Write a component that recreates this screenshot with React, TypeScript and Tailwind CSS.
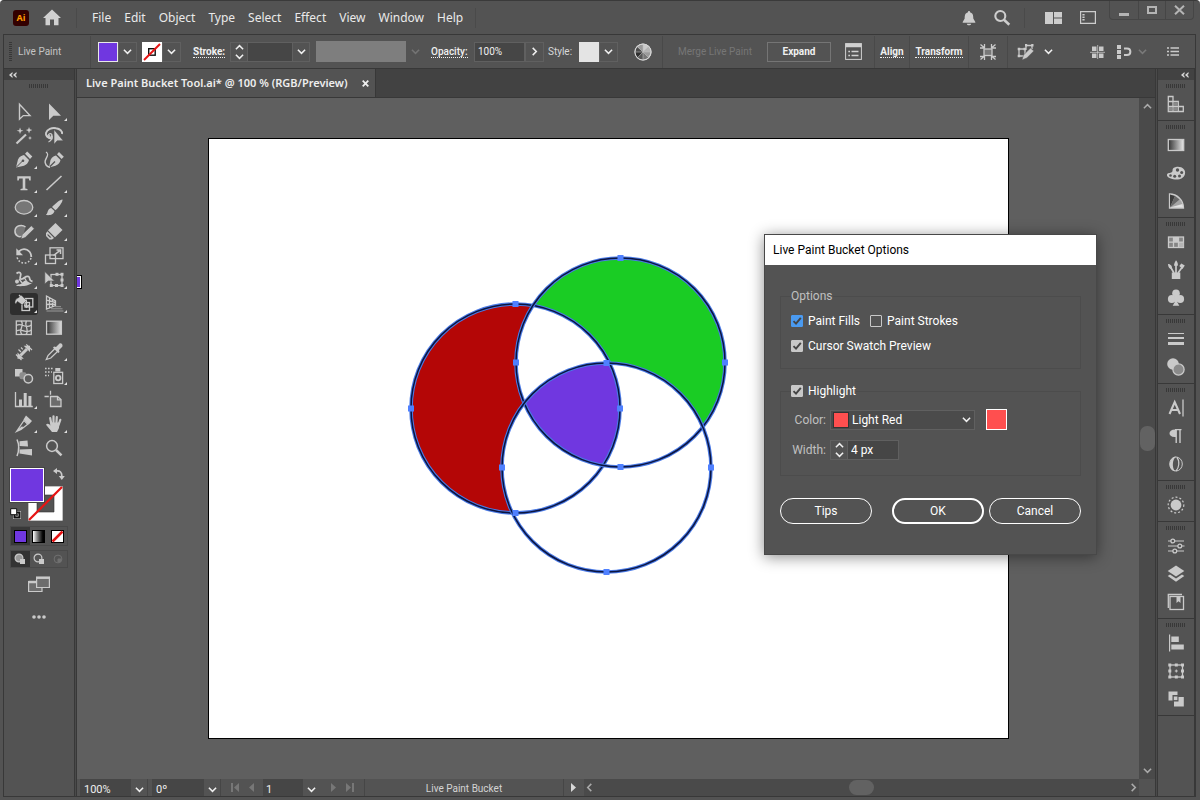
import React, { useState } from 'react';
import type { ReactNode } from 'react';
import { clsx } from 'clsx';

interface IconProps {
  children: ReactNode;
  size?: number;
}

// 20x20 drawing grid shared by every tool and panel icon
const Icon = ({ children, size = 20 }: IconProps) => (
  <svg
    width={size}
    height={size}
    viewBox="0 0 20 20"
    fill="none"
    stroke="#cacaca"
    strokeWidth="1.3"
    className="shrink-0 overflow-visible"
    aria-hidden="true"
  >
    {children}
  </svg>
);

const Chevron = ({ dir = 'down', color = '#f0f0f0' }: { dir?: 'down' | 'up' | 'left' | 'right'; color?: string }) => {
  const paths = { down: 'M1 3 L5 7 L9 3', up: 'M1 7 L5 3 L9 7', left: 'M7 1 L3 5 L7 9', right: 'M3 1 L7 5 L3 9' };
  return (
    <svg width="9" height="9" viewBox="0 0 10 10" fill="none" stroke={color} strokeWidth="1.7" className="shrink-0" aria-hidden="true">
      <path d={paths[dir]} />
    </svg>
  );
};

const Spinner = () => (
  <span className="flex h-full w-4 shrink-0 flex-col items-center justify-between">
    <button aria-label="Increase"><Chevron dir="up" /></button>
    <button aria-label="Decrease"><Chevron /></button>
  </span>
);

const Grip = () => (
  <span className="block h-1 w-5 bg-[repeating-linear-gradient(90deg,#383838_0_1px,transparent_1px_2px)]" />
);

const Divider = () => <span className="block h-8 w-px shrink-0 bg-[#494949]" />;

const DoubleChevron = () => (
  <svg width="8" height="6" viewBox="0 0 8 6" fill="#d8d8d8" aria-hidden="true">
    <path d="M3.5 0 V2 L2.2 3 L3.5 4 V6 L0 3 Z M7.5 0 V2 L6.2 3 L7.5 4 V6 L4 3 Z" />
  </svg>
);

const F = '#cacaca';
const BG = '#535353';

const tools: { name: string; corner?: boolean; icon: ReactNode }[] = [
  { name: 'Selection', icon: <path d="M5.5 2.2 V17.2 L9.3 13.6 H16 Z" strokeWidth="1.4" /> },
  { name: 'Direct Selection', corner: true, icon: <path d="M5 1.5 V18 L9.3 13.8 H17 Z" fill={F} stroke="none" /> },
  {
    name: 'Magic Wand',
    icon: (
      <g>
        <path d="M2.5 17.5 L12 8.5" strokeWidth="2.2" />
        <path d="M6 1.5 L7 4 L9.5 4.8 L7 5.6 L6 8 L5.2 5.6 L2.6 4.8 L5.2 4 Z M15 1 L15.9 3.3 L18.4 4 L15.9 4.9 L15 7.5 L14.2 4.9 L11.8 4 L14.2 3.3 Z M16 10 L16.6 11.4 L18 12 L16.6 12.6 L16 14 L15.4 12.6 L14 12 L15.4 11.4 Z" fill={F} stroke="none" />
      </g>
    ),
  },
  {
    name: 'Lasso',
    icon: (
      <g>
        <path d="M8.5 12.5 C3 12.5 1.5 9 2 7 C3 3 8 1.5 12 2.2 C16 2.8 18.5 5 18 8" strokeWidth="1.9" />
        <path d="M4.5 12 C2.5 9 6 6.5 7.8 8.5 C9 11 7.5 15 4.5 16 M7.8 9.5 C6 13 3.8 11 6 9.3" />
        <path d="M10 3.5 V18.3 L13.2 14.8 H19.3 Z" fill={F} stroke={BG} strokeWidth="0.6" />
      </g>
    ),
  },
  {
    name: 'Pen',
    corner: true,
    icon: (
      <g fill={F} stroke="none">
        <path d="M2 17.5 L4 9.5 C5.5 6.5 8 5.5 10 5 L15 10 C14.5 12.5 12.5 14.8 10 15.7 Z" />
        <path d="M11 3.8 L13.2 1.5 L18.3 6.6 L16 9 Z" />
        <path d="M2.5 17 L8.5 11" stroke={BG} strokeWidth="1" />
        <circle cx="9" cy="10.7" r="1.3" fill={BG} />
      </g>
    ),
  },
  {
    name: 'Curvature',
    icon: (
      <g fill={F} stroke="none">
        <path d="M5 17.5 L6.5 10 C8 7 10 6 12 5.5 L16.5 10 C16 12.8 14 14.8 11.5 15.8 Z" />
        <path d="M13 4.2 L15 2 L19.8 6.7 L17.6 9 Z" />
        <path d="M5.5 17 L11 11.5" stroke={BG} />
        <path d="M2 2 C7 5 -0.5 9 1.3 13 C2 16 4 17 6 17.2" fill="none" stroke={F} strokeWidth="1.4" />
      </g>
    ),
  },
  { name: 'Type', corner: true, icon: <path d="M3.3 2.2 H16.7 V6.5 H15.3 L14.8 4.5 H11.3 V14.5 L13.5 15 V16.2 H6.5 V15 L8.7 14.5 V4.5 H5.2 L4.7 6.5 H3.3 Z" fill={F} stroke="none" /> },
  { name: 'Line Segment', corner: true, icon: <path d="M2.5 16 L17.5 2" strokeWidth="1.6" /> },
  { name: 'Ellipse', corner: true, icon: <ellipse cx="10" cy="9.3" rx="8.8" ry="6.8" fill="#777" /> },
  {
    name: 'Paintbrush',
    corner: true,
    icon: (
      <g fill={F} stroke="none">
        <path d="M18.5 1.5 C19 3 16 8 11.5 12.3 L8 9 C12 5 16.5 1.2 18.5 1.5 Z" />
        <path d="M7.2 10 L10.5 13 C9.5 17 5.5 17.5 1.8 17 C4.2 15.5 3 11 7.2 10 Z" />
      </g>
    ),
  },
  {
    name: 'Shaper',
    corner: true,
    icon: (
      <g>
        <path d="M9.5 13 C5 17.5 0.5 12.5 1 8.5 C1.5 3.5 8 2 11.5 5" fill="#777" strokeWidth="1.5" />
        <path d="M7 17 L8.2 12.6 L17.3 3.8 L20.3 6.7 L11.2 15.6 Z" fill={F} stroke={BG} strokeWidth="0.6" />
      </g>
    ),
  },
  {
    name: 'Eraser',
    corner: true,
    icon: (
      <g fill={F} stroke="none">
        <path d="M11.5 1 L18.5 8 L11 15.3 L4 8.3 Z" />
        <path d="M3.4 9.2 L10 15.9 L8 17.5 H5.5 L2 13.9 V11.2 Z M3.6 11.8 V13.4 L6 15.8 L7.5 15.5 Z" fillRule="evenodd" />
      </g>
    ),
  },
  {
    name: 'Rotate',
    corner: true,
    icon: (
      <g>
        <path d="M17.3 11 C17 4 10 0.5 4.8 5.5" strokeWidth="1.8" />
        <path d="M2.3 2.3 V9.3 H9 Z" fill={F} stroke="none" />
        <path d="M17 12 C15 19 5 19 3 11" strokeWidth="1.5" strokeDasharray="1.7 1.7" />
      </g>
    ),
  },
  {
    name: 'Scale',
    corner: true,
    icon: (
      <g>
        <rect x="6" y="1.8" width="13" height="10.8" />
        <rect x="1.5" y="9" width="10" height="8.5" />
        <path d="M9.5 9.5 L15.5 4.8 M12.5 4 H16.5 V8" strokeWidth="1.5" />
      </g>
    ),
  },
  {
    name: 'Width',
    corner: true,
    icon: (
      <g>
        <path d="M2.5 3.5 C6 0.8 7.5 3.5 6.5 6 C5.8 8 6 9.5 8 9 C10.5 8 12 5.5 14.5 6.5 C17 8 14 10.5 18.5 11.5" strokeWidth="1.8" />
        <path d="M2 16 C4 13 6 16 9 12 C12 9 13 12.5 18 13.5 C13 15.5 12 16.5 2 16 Z" fill={F} stroke="none" />
        <path d="M10 7 L14 14 M5 9 L9 14" />
        <circle cx="3" cy="11.5" r="1.3" fill={F} />
      </g>
    ),
  },
  {
    name: 'Free Transform',
    corner: true,
    icon: (
      <g>
        <rect x="7" y="4.5" width="11" height="11" />
        <g fill={F} stroke="none">
          <rect x="16.5" y="2.8" width="3" height="3" /><rect x="16.5" y="14" width="3" height="3" />
          <rect x="5.8" y="14" width="3" height="3" /><rect x="11" y="14" width="3" height="3" />
          <rect x="16.5" y="8.5" width="3" height="3" /><rect x="11.5" y="2.8" width="3" height="3" />
        </g>
        <path d="M0.8 1.5 V14 L4.2 11 H10.5 Z" fill={F} stroke={BG} strokeWidth="0.6" />
      </g>
    ),
  },
  {
    name: 'Live Paint Bucket',
    corner: true,
    icon: (
      <g>
        <rect x="11" y="4.5" width="7.8" height="8.5" />
        <rect x="8" y="8.5" width="7.5" height="8" />
        <path d="M4 4 L7.5 1.2 L12.5 6.5 L8.3 11 L3.5 7.5 C2.3 8.5 2.8 10 1.5 9.8 C0.2 9 1.2 4.5 4 4 Z" fill={F} stroke="#2e2e2e" strokeWidth="0.5" />
        <path d="M5 1 L7 3" />
        <path d="M12 5.5 C13 7.5 12.8 9 12.5 13 M10.3 11 L12.5 13.4 L14.8 11" />
      </g>
    ),
  },
  {
    name: 'Perspective Grid',
    corner: true,
    icon: (
      <g>
        <path d="M2.5 2 V15 L11.5 11.5 V7 Z M2.5 6.2 L11.5 8.5 M2.5 10.5 L11.5 10 M5.5 3.8 V13.7 M8.5 5.5 V12.5" />
        <path d="M11 12.7 H17 M7 14.8 H18.5 M2.5 17 H19.5" strokeWidth="1" stroke="#9a9a9a" />
      </g>
    ),
  },
  {
    name: 'Mesh',
    icon: (
      <g>
        <rect x="2.3" y="3" width="15" height="13.5" />
        <path d="M2.3 7.5 C8 3.5 11 12 17.3 7 M2.3 13 C8 9.5 12 16.5 17.3 12 M7 3 C11.5 7 3.5 12 8 16.5 M12.5 3 C9.5 7 16 12 12 16.5" />
      </g>
    ),
  },
  {
    name: 'Gradient',
    icon: (
      <g>
        <linearGradient id="toolGrad"><stop offset="0" stopColor="#333" /><stop offset="1" stopColor="#ddd" /></linearGradient>
        <rect x="2.6" y="3.2" width="14.8" height="13" fill="url(#toolGrad)" />
      </g>
    ),
  },
  {
    name: 'Dimension',
    icon: (
      <g>
        <path d="M6.5 13.5 L13 7" strokeWidth="3" />
        <path d="M3.5 10.5 V16.8 H9.8 Z M9.7 3.7 H16 V10 Z" fill={F} stroke="none" />
        <path d="M2 12.5 L7.5 18 M12.3 2.3 L18 8 M4.5 7.5 L7 10 M7 5.5 L8.8 7.3" strokeWidth="1.2" />
      </g>
    ),
  },
  {
    name: 'Eyedropper',
    corner: true,
    icon: (
      <g>
        <path d="M2.3 17.5 L4 13.5 L11 6.5 L13.8 9.2 L6.8 16 Z" />
        <path d="M10 4.5 L12 5 L15.5 1.5 C17.5 0.8 19.2 2.8 18.3 4.7 L15 8 L15.5 10 L14.3 11 L9 5.7 Z" fill={F} stroke="none" />
      </g>
    ),
  },
  {
    name: 'Blend',
    icon: (
      <g>
        <rect x="1" y="3" width="7.5" height="7.5" fill={F} stroke="none" />
        <rect x="5.5" y="6.2" width="7" height="7" rx="2" fill="#8d8d8d" stroke="none" />
        <circle cx="14.3" cy="12.8" r="4.2" fill="#5c5c5c" strokeWidth="1.5" />
      </g>
    ),
  },
  {
    name: 'Symbol Sprayer',
    corner: true,
    icon: (
      <g>
        <rect x="9.8" y="6.3" width="8.8" height="11.2" />
        <rect x="11.3" y="2" width="5" height="3.5" fill={F} stroke="none" />
        <circle cx="14.2" cy="12" r="2.3" strokeWidth="1.8" />
        <path d="M1 2.5 H9.5 M1 6 H8 M1 9.5 H5" strokeWidth="1.6" strokeDasharray="1.6 1.4" />
      </g>
    ),
  },
  {
    name: 'Column Graph',
    corner: true,
    icon: (
      <g>
        <path d="M1.5 2 V16.5 H18.8" />
        <path d="M5 9.5 H8 V16 H5 Z M9.7 3 H12.7 V16 H9.7 Z M14.4 6 H17.4 V16 H14.4 Z" fill={F} stroke="none" />
      </g>
    ),
  },
  {
    name: 'Artboard',
    icon: (
      <g>
        <path d="M6.5 6.5 H13.5 L17 9.5 V16.5 H6.5 Z" fill="#6c6c6c" />
        <path d="M13.5 6.5 V9.8 H17 M0.5 6.5 H4.8 M6.5 0.8 V4.8" />
      </g>
    ),
  },
  {
    name: 'Slice',
    corner: true,
    icon: (
      <g>
        <path d="M2.5 17.5 L10 6.5 L13.8 10.3 L7 15.5 Z M2.5 17.5 L8.5 12.8" />
        <path d="M12 1.5 L18 7 L14.8 10.5 L9.5 5.5 Z" fill={F} stroke="none" />
      </g>
    ),
  },
  {
    name: 'Hand',
    corner: true,
    icon: (
      <g>
        <path d="M6.2 4 L7.3 10 M9.5 2.3 V9 M12.8 3 L12.4 9 M16.3 5.8 L14.5 11" strokeWidth="2.2" strokeLinecap="round" />
        <path d="M6.3 8.5 H15.5 L15 14 L13 18 H8 L2 10.8 C3.3 8.8 5.2 10 6.6 11.5 Z" fill={F} stroke="none" />
      </g>
    ),
  },
  {
    name: 'Perspective Selection',
    icon: (
      <g fill={F} stroke="none">
        <path d="M3 1.5 C5 6 5 13 3 18" fill="none" stroke={F} strokeWidth="1.5" />
        <path d="M5.5 3.3 L13.5 2.5 L14 8.5 L5.5 8 Z M5.5 11.5 L18 11 V17.5 L5.5 15.5 Z" />
      </g>
    ),
  },
  { name: 'Zoom', icon: <g><circle cx="8" cy="8" r="5.4" strokeWidth="1.5" /><path d="M12 12 L17.5 17.3" strokeWidth="2.5" /></g> },
];

const panelGroups: { name: string; icon: ReactNode }[][] = [
  [
    {
      name: 'Color Guide',
      icon: (
        <g strokeWidth="1.3">
          <path d="M2.3 2.5 H7 V7.5 H2.3 Z M2.3 7.5 V17.5 H17.3 V12.5 H12.3 V7.5 Z M7 7.5 V17.5 M12.3 12.5 V17.5 M2.3 12.5 H12.3" />
          <path d="M7.7 8.2 h4 v3.7 h-4 Z M2.9 13.1 h3.5 v3.7 h-3.5 Z M7.7 13.1 h4 v3.7 h-4 Z" fill="#8a8a8a" stroke="none" />
        </g>
      ),
    },
  ],
  [
    {
      name: 'Gradient',
      icon: (
        <g>
          <linearGradient id="panelGrad"><stop offset="0" stopColor="#333" /><stop offset="1" stopColor="#e8e8e8" /></linearGradient>
          <rect x="2.3" y="4.5" width="15.4" height="11" fill="url(#panelGrad)" />
        </g>
      ),
    },
    {
      name: 'Color',
      icon: (
        <g fill={F} stroke="none">
          <path d="M10 4 C16 3 20 7 19 11 C18 15 14 17 9 16.5 C4 16 0.5 14 1 11.5 C1.5 9.5 4 10.5 6 9 C7.5 7.5 5 5 10 4 Z" />
          <g fill={BG}><circle cx="11.5" cy="7" r="1.7" /><circle cx="15.7" cy="9.5" r="1.5" /><circle cx="13.5" cy="13" r="1.5" /><circle cx="8.7" cy="13.3" r="1.5" /><circle cx="4.5" cy="12.5" r="1.3" /></g>
        </g>
      ),
    },
    {
      name: 'Color Themes',
      icon: (
        <g>
          <path d="M3.5 3 V17 H17.5 C17.5 9 11 3 3.5 3 Z" fill="#a5a5a5" />
          <path d="M4 16.5 V3.5 L9 5 Z" fill="#3c3c3c" stroke="none" />
          <path d="M4 16.5 L9 5 L13.5 8.5 Z" fill="#686868" stroke="none" />
          <path d="M4 16.5 L16.5 13 L17 16.5 Z" fill="#e2e2e2" stroke="none" />
        </g>
      ),
    },
  ],
  [
    {
      name: 'Swatches',
      icon: (
        <g>
          <rect x="2.5" y="5" width="15" height="10.5" fill="#858585" />
          <rect x="7.5" y="5" width="5" height="5" fill={F} stroke="none" /><rect x="12.5" y="10" width="5" height="5" fill="#b5b5b5" stroke="none" />
          <path d="M2.5 10.2 H17.5 M7.5 5 V15.5 M12.5 5 V15.5" />
        </g>
      ),
    },
    {
      name: 'Brushes',
      icon: (
        <g>
          <rect x="5.8" y="12.5" width="8.5" height="6.5" fill={F} stroke="none" />
          <path d="M8 13 L4.5 7 M10 13 V4 M12 13 L16.3 7" strokeWidth="1.7" />
          <path d="M2 4 C5 4 6.5 6.5 5.8 9 C3.5 9 2 7 2 4 Z M8 5.8 C8 3.5 9 2 10 0.3 C11.5 2 12.2 4 11.8 5.8 Z M13.3 6 L15.3 3.6 L18.8 5.5 L16.5 9 Z" fill={F} stroke="none" />
        </g>
      ),
    },
    { name: 'Symbols', icon: <g fill={F} stroke="none"><circle cx="10" cy="5.3" r="3.8" /><circle cx="5.8" cy="11" r="3.9" /><circle cx="14.2" cy="11" r="3.9" /><path d="M8.8 8 H11.2 V14 L13.3 17.7 H6.7 L8.8 14 Z" /></g> },
  ],
  [
    { name: 'Stroke', icon: <g fill={F} stroke="none"><rect x="2" y="4" width="16" height="1" /><rect x="2" y="8" width="16" height="2" /><rect x="2" y="13" width="16" height="3" /></g> },
    { name: 'Transparency', icon: <g><circle cx="7" cy="7" r="5.8" fill={F} stroke="none" /><circle cx="12.5" cy="12.5" r="5.6" fill="#8a8a8a" /></g> },
  ],
  [
    { name: 'Character', icon: <g><path d="M3.5 16 L8.7 4 L14 16 M5.2 12 H12.2" strokeWidth="2.1" /><path d="M17 1.5 V18.5" /></g> },
    { name: 'Paragraph', icon: <g><path d="M10 3.5 C1 3 2 11.5 9 11 H10 Z" fill={F} stroke="none" /><path d="M10.2 3.8 V17 M14 3.8 V17 M9 3.6 H15.5" strokeWidth="1.4" /></g> },
    { name: 'OpenType', icon: <g><ellipse cx="10" cy="10" rx="6.3" ry="7" strokeWidth="1" /><path d="M10 2.5 C2 3 2 17 9 17.3 C6 14 6 6 10 2.5 Z" fill={F} stroke="none" /><path d="M11 3.5 C14 7 13 14 10 17" strokeWidth="1.2" /></g> },
  ],
  [{ name: 'Appearance', icon: <g><circle cx="10" cy="10" r="5.4" fill={F} stroke="none" /><circle cx="10" cy="10" r="7.8" strokeDasharray="2 2" strokeWidth="1.2" /></g> }],
  [
    { name: 'Properties', icon: <g><path d="M2 5 H5 M8.6 5 H18 M2 10 H12 M15.6 10 H18.5 M2 15 H7 M10.6 15 H18" strokeWidth="1.2" /><circle cx="6.8" cy="5" r="1.9" /><circle cx="13.8" cy="10" r="1.9" /><circle cx="8.8" cy="15" r="1.9" /></g> },
    { name: 'Layers', icon: <g fill={F} stroke="none"><path d="M10 1.5 L18.3 7 L10 12.5 L1.7 7 Z" /><path d="M1.7 12 L4 10.5 L10 14.6 L16 10.5 L18.3 12 L10 17.7 Z" /></g> },
    { name: 'Libraries', icon: <g><rect x="4" y="4.5" width="13.5" height="13" /><path d="M2.3 16 V2.5 H16" /><path d="M10.5 4.5 V11 L12.5 9.3 L14.5 11 V4.5 Z" fill={F} stroke="none" /></g> },
  ],
  [
    { name: 'Align', icon: <g fill={F} stroke="none"><rect x="3" y="1.5" width="1.2" height="17" /><rect x="5.3" y="3.5" width="7.5" height="5.5" /><rect x="5.3" y="11.5" width="12.5" height="5" /></g> },
    {
      name: 'Transform',
      icon: (
        <g>
          <rect x="4" y="4" width="12.5" height="12" />
          <path d="M2.3 2.5 h3 v3 h-3 Z M8.8 2.5 h3 v3 h-3 Z M15 2.5 h3 v3 h-3 Z M2.3 8.5 h3 v3 h-3 Z M15 8.5 h3 v3 h-3 Z M2.3 14.5 h3 v3 h-3 Z M8.8 14.5 h3 v3 h-3 Z M15 14.5 h3 v3 h-3 Z" fill={F} stroke="none" />
          <path d="M10.3 8.5 V11.5 M8.8 10 H11.8" strokeWidth="1" />
        </g>
      ),
    },
    { name: 'Pathfinder', icon: <g fill={F} stroke="none"><path d="M2.5 2.5 H11.5 V6 H6.5 V11.5 H2.5 Z M12.5 8 H17.8 V17.5 H8 V12.5 H12.5 Z" /><rect x="7.8" y="7.5" width="3.6" height="3.6" /></g> },
  ],
];

const menus = ['File', 'Edit', 'Object', 'Type', 'Select', 'Effect', 'View', 'Window', 'Help'];

const MenuBar = () => (
  <header className="flex h-[33px] shrink-0 items-center pr-1.5">
    <div className="flex h-full flex-1 items-center pl-[13px]">
      <span className="flex size-4 items-center justify-center rounded-[3px] bg-[#330000] text-[9px] leading-none font-bold text-[#ff9a00]">Ai</span>
      <button aria-label="Home" className="ml-[14px]">
        <svg width="18" height="17" viewBox="0 0 18 17" fill="#d0d0d0" aria-hidden="true">
          <path d="M9 0.5 L0 9 H2.5 V16.3 H7 V10.5 H11 V16.3 H15.5 V9 H18 Z" />
        </svg>
      </button>
      <span className="ml-[15px] h-5 w-px bg-[#4a4a4a]" />
      <nav className="ml-[15px] flex gap-[13px] text-[12px] text-[#eaeaea]">
        {menus.map((m) => (
          <button key={m}>{m}</button>
        ))}
      </nav>
      <span className="ml-3 h-5 w-px bg-[#4a4a4a]" />
    </div>

    <div className="flex items-center">
      <button aria-label="Notifications">
        <svg width="14" height="16" viewBox="0 0 14 16" fill="#cdcdcd" aria-hidden="true">
          <path d="M7 1 C7.8 1 8 1.6 8 2.2 C11 3 11.3 5.5 11.3 8.5 L13.3 12 V12.8 H0.7 V12 L2.7 8.5 C2.7 5.5 3 3 6 2.2 C6 1.6 6.2 1 7 1 Z M4.8 13.8 H9.2 C9 15.8 5 15.8 4.8 13.8 Z" />
        </svg>
      </button>
      <button aria-label="Search" className="ml-[17px]">
        <svg width="18" height="17" viewBox="0 0 18 17" fill="none" stroke="#cdcdcd" aria-hidden="true">
          <circle cx="7.3" cy="7" r="5" strokeWidth="2.1" />
          <path d="M11 10.8 L16.3 15.8" strokeWidth="2.6" />
        </svg>
      </button>
      <span className="ml-[13px] h-5 w-px bg-[#4a4a4a]" />
      <button aria-label="Arrange Documents" className="ml-5">
        <svg width="17" height="12" viewBox="0 0 17 12" fill="#cdcdcd" aria-hidden="true"><path d="M0 0 H8 V12 H0 Z M9 0 H17 V5.5 H9 Z M9 6.5 H17 V12 H9 Z" /></svg>
      </button>
      <button aria-label="Workspace" className="ml-[18px]">
        <svg width="16" height="13" viewBox="0 0 16 13" fill="none" stroke="#cdcdcd" aria-hidden="true"><path d="M0.6 0.6 H15.4 V12.4 H0.6 Z" strokeWidth="1.2" /><path d="M3.5 3 V10.5" strokeWidth="2.2" strokeDasharray="1.5 1" /></svg>
      </button>
    </div>

    <div className="ml-[13px] flex h-[19px] self-start rounded-b border border-t-0 border-[#464646]">
      <button aria-label="Minimize" className="flex w-7 items-center justify-center">
        <span className="mt-2 h-[3px] w-[10px] bg-[#b4b4b4]" />
      </button>
      <button aria-label="Maximize" className="flex w-7 items-center justify-center border-x border-[#464646]">
        <span className="h-2 w-[10px] border-2 border-[#b4b4b4]" />
      </button>
      <button aria-label="Close" className="flex w-[27px] items-center justify-center">
        <svg width="11" height="10" viewBox="0 0 11 10" stroke="#b4b4b4" strokeWidth="2" aria-hidden="true"><path d="M1 0.8 L10 9.2 M10 0.8 L1 9.2" /></svg>
      </button>
    </div>
  </header>
);

const DropButton = ({ label, dir = 'down' }: { label: string; dir?: 'down' | 'right' }) => (
  <button aria-label={label} className="flex h-5 w-[19px] shrink-0 items-center justify-center border border-[#606060]">
    <Chevron dir={dir} />
  </button>
);

const ControlBar = () => (
  <div className="flex h-[33px] shrink-0 items-center justify-between font-[Roboto,sans-serif] text-[10px] text-[#f0f0f0]">
    <div className="flex items-center">
      <span className="ml-[5px] h-5 w-[3px] bg-[repeating-linear-gradient(#383838_0_1px,transparent_1px_2px)]" />
      <span className="ml-1.5 w-[72px] whitespace-nowrap text-[#c4c4c4]">Live Paint</span>
      <Divider />
      <button aria-label="Fill" className="ml-[7px] size-5 shrink-0 border border-[#e8e8e8] bg-[#7037e0]" />
      <DropButton label="Fill options" />
      <button aria-label="Stroke color" className="ml-[5px] size-5 shrink-0 bg-white">
        <svg width="20" height="20" viewBox="0 0 20 20" fill="none" aria-hidden="true"><rect x="6.7" y="6.7" width="6.5" height="6.5" stroke="#111" strokeWidth="1.4" /><path d="M2 18 L18 2" stroke="#e61414" strokeWidth="2" /></svg>
      </button>
      <DropButton label="Stroke options" />
      <label htmlFor="stroke-weight" className="ml-3 w-[37px] shrink-0 font-bold"><span className="border-b border-dotted">Stroke:</span></label>
      <div className="flex h-5 shrink-0 border border-[#606060]">
        <Spinner />
        <input id="stroke-weight" className="w-[45px] border-l border-[#606060] bg-[#464646] outline-none" />
        <button aria-label="Stroke weight presets" className="flex w-[17px] items-center justify-center border-l border-[#606060]"><Chevron /></button>
      </div>
      <span className="ml-1.5 h-[21px] w-[90px] shrink-0 bg-[#7e7e7e]" />
      <span className="flex w-[19px] shrink-0 justify-center"><Chevron color="#747474" /></span>
      <label htmlFor="opacity" className="ml-1.5 w-[43px] shrink-0 font-medium"><span className="border-b border-dotted">Opacity:</span></label>
      <input id="opacity" defaultValue="100%" className="h-5 w-[51px] shrink-0 border border-[#606060] bg-[#464646] pl-[3px] outline-none" />
      <DropButton label="Opacity slider" dir="right" />
      <span className="ml-1 w-[31px] shrink-0 text-[#d8d8d8]">Style:</span>
      <button aria-label="Graphic style" className="size-5 shrink-0 bg-[#e4e4e4]" />
      <DropButton label="Style options" />
      <button aria-label="Recolor Artwork" className="ml-4 shrink-0">
        <svg width="18" height="18" viewBox="0 0 18 18" aria-hidden="true">
          <circle cx="9" cy="9" r="8" fill="#9a9a9a" stroke="#d4d4d4" strokeWidth="1.2" />
          <path d="M9 9 L9 1 A8 8 0 0 1 15 4 Z" fill="#ccc" /><path d="M9 9 L15 4 A8 8 0 0 1 17 9 Z" fill="#b4b4b4" />
          <path d="M9 9 L3 4 A8 8 0 0 0 1 9 Z" fill="#4b4b4b" /><path d="M9 9 L1 9 A8 8 0 0 0 4 15 Z" fill="#2f2f2f" />
          <path d="M9 9 L4 15 A8 8 0 0 0 9 17 Z" fill="#585858" /><path d="M9 9 L9 17 A8 8 0 0 0 14.5 14.5 Z" fill="#777" />
          <path d="M9 1 V17 M1 9 H17 M3.4 3.4 L14.6 14.6 M14.6 3.4 L3.4 14.6" stroke="#bcbcbc" strokeWidth="0.6" />
          <circle cx="9" cy="9" r="8" fill="none" stroke="#d4d4d4" />
        </svg>
      </button>
      <span className="ml-[10px]"><Divider /></span>
      <button disabled className="mx-[14px] w-[76px] shrink-0 text-center whitespace-nowrap text-[#767676]">Merge Live Paint</button>
      <button className="h-5 w-16 shrink-0 border border-[#757575] font-bold">Expand</button>
      <button aria-label="Gap options" className="mr-3 ml-[14px] shrink-0">
        <svg width="17" height="17" viewBox="0 0 17 17" fill="none" stroke="#d0d0d0" aria-hidden="true"><rect x="0.6" y="0.6" width="15.8" height="15.8" /><path d="M0.6 2.5 H16.4" strokeWidth="3.5" /><path d="M3.3 8.5 H5 M6.5 8.5 H13.5 M3.3 12.5 H5 M6.5 12.5 H13.5" strokeWidth="1.5" /></svg>
      </button>
      <Divider />
      <button className="w-[34px] shrink-0 font-bold"><span className="border-b border-dotted">Align</span></button>
      <Divider />
      <button className="w-[58px] shrink-0 font-bold"><span className="border-b border-dotted">Transform</span></button>
      <Divider />
      <button aria-label="Isolate" className="mx-[9px] shrink-0">
        <Icon>
          <rect x="6" y="7" width="8" height="6.5" fill="#777" />
          <path d="M2.5 2.5 L6 5.5 M17.5 2.5 L14 5.5 M2.5 17.5 L6 14.5 M17.5 17.5 L14 14.5 M6.5 2 V6 H2 M13.5 2 V6 H18 M2 14.5 H6.5 V18 M18 14.5 H13.5 V18" />
        </Icon>
      </button>
      <Divider />
      <button aria-label="Edit similar shapes" className="ml-2 shrink-0">
        <Icon>
          <path d="M3 7 H9 V14 H3 Z M10 3.5 H16 V7 M10 3.5 V8" />
          <path d="M1.7 5.7 h2.5 v2.5 h-2.5 Z M1.7 12.7 h2.5 v2.5 h-2.5 Z M7.5 5.7 h2.5 v2.5 h-2.5 Z M9 2 h2.2 v2.5 h-2.2 Z M15.2 2 h2.3 v2.5 h-2.3 Z" fill={F} stroke="none" />
          <path d="M6 18 L7.5 13 L14.5 6 L17.8 9 L10.8 16 Z" fill={F} stroke={BG} strokeWidth="0.5" />
        </Icon>
      </button>
      <button aria-label="Similar shape options" className="ml-2"><Chevron /></button>
    </div>

    <div className="flex items-center pr-4">
      <button aria-label="Snap to grid">
        <svg width="15" height="14" viewBox="0 0 15 14" fill={F} aria-hidden="true"><path d="M2 1.5 H6.5 V6 H2 Z M9 1.5 H13.5 V6 H9 Z M2 8.5 H6.5 V13 H2 Z M9 8.5 H13.5 V13 H9 Z" /><path d="M7.7 0 V14 M0 7.3 H15" stroke={F} strokeWidth="0.8" /></svg>
      </button>
      <button aria-label="Snap to point" className="ml-3">
        <svg width="15" height="14" viewBox="0 0 15 14" fill="none" stroke={F} aria-hidden="true"><path d="M2 0 V14" strokeWidth="4" strokeDasharray="4 1" /><path d="M7 3.5 H10 C14.5 3.5 14.5 10 10 10 H7" strokeWidth="2" /></svg>
      </button>
      <span className="ml-1.5"><Chevron color="#7a7a7a" /></span>
      <button aria-label="Panel menu" className="ml-5">
        <svg width="12" height="9" viewBox="0 0 12 9" stroke={F} strokeWidth="1.4" aria-hidden="true"><path d="M0 1 H2 M3.5 1 H12 M0 4.5 H2 M3.5 4.5 H12 M0 8 H2 M3.5 8 H12" /></svg>
      </button>
    </div>
  </div>
);

const ToolPanel = () => {
  const [active, setActive] = useState('Live Paint Bucket');

  return (
    <aside className="flex w-[71px] shrink-0 flex-col border-r border-[#383838]">
      <button aria-label="Collapse" className="flex h-[11px] w-full shrink-0 items-center bg-[#424242] pl-[5px]"><DoubleChevron /></button>
      <div className="flex justify-center pt-1"><Grip /></div>
      <div className="mt-3 grid grid-cols-2 px-[5px]">
        {tools.map((t) => (
          <button
            key={t.name}
            aria-label={t.name}
            onClick={() => setActive(t.name)}
            className={clsx(
              'relative mx-px my-px flex h-[22px] items-center justify-center rounded-[3px]',
              active === t.name && 'bg-[#2e2e2e]'
            )}
          >
            <Icon>{t.icon}</Icon>
            {t.corner && (
              <svg width="3" height="3" viewBox="0 0 3 3" fill="#e0e0e0" className="absolute right-px bottom-[2px]" aria-hidden="true"><path d="M3 0 V3 H0 Z" /></svg>
            )}
          </button>
        ))}
      </div>

      {/* fill / stroke swatches overlap on purpose */}
      <div className="relative mx-1.5 mt-2 h-[52px]">
        <button aria-label="Stroke" className="absolute top-[18px] left-[18px] size-[35px]">
          <svg width="35" height="35" viewBox="0 0 35 35" aria-hidden="true">
            <path d="M0 0 H35 V35 H0 Z M9 9 V26 H26 V9 Z" fill="white" fillRule="evenodd" stroke="#333" strokeWidth="0.6" />
            <path d="M1 34 L34 1" stroke="#e61414" strokeWidth="2.2" />
          </svg>
        </button>
        <button aria-label="Fill" className="absolute top-0 left-0 size-[34px] border border-white bg-[#7037e0] outline outline-[#444]" />
        <button aria-label="Swap" className="absolute top-0 left-[43px]">
          <svg width="12" height="12" viewBox="0 0 12 12" fill="none" aria-hidden="true"><path d="M3.5 3 C7 2.5 9 4.5 8.8 8" stroke={F} strokeWidth="1.7" /><path d="M0 3 L4 0 V6 Z M8.8 12 L5.8 8 H11.8 Z" fill={F} /></svg>
        </button>
        <button aria-label="Default fill and stroke" className="absolute top-10 left-0">
          <svg width="11" height="11" viewBox="0 0 11 11" aria-hidden="true"><path d="M4.5 4.5 H9.5 V9.5 H4.5 Z" fill="none" stroke="#ddd" strokeWidth="3" /><path d="M4.5 4.5 H9.5 V9.5 H4.5 Z" fill="none" stroke="#111" strokeWidth="2" /><path d="M0.7 0.7 H6.7 V6.7 H0.7 Z" fill="white" stroke="#111" /></svg>
        </button>
      </div>

      <div className="mx-1.5 mt-1.5 grid h-5 w-[58px] grid-cols-3 border border-[#494949]">
        <button aria-label="Color" className="flex items-center justify-center bg-[#383838]"><span className="size-[13px] border border-black bg-[#7037e0]" /></button>
        <button aria-label="Gradient" className="flex items-center justify-center"><span className="size-[13px] border border-black bg-linear-to-r from-white to-black" /></button>
        <button aria-label="None" className="flex items-center justify-center">
          <svg width="13" height="13" viewBox="0 0 13 13" aria-hidden="true"><rect x="0.5" y="0.5" width="12" height="12" fill="white" stroke="black" /><path d="M1.5 11.5 L11.5 1.5" stroke="#e61414" strokeWidth="2.5" /></svg>
        </button>
      </div>

      <div className="mx-1.5 mt-1 grid h-[18px] w-[58px] grid-cols-3 border border-[#494949]">
        {['Draw Normal', 'Draw Behind', 'Draw Inside'].map((mode, i) => (
          <button key={mode} aria-label={mode} className={clsx('flex items-center justify-center', i === 0 && 'bg-[#333333]')}>
            <svg width="12" height="12" viewBox="0 0 12 12" fill="none" aria-hidden="true">
              {i < 2 && <circle cx="5" cy="5" r="3.9" fill={i === 0 ? '#999' : '#555'} stroke={F} strokeWidth="1.2" />}
              {i < 2 && <rect x="6" y="6" width="5" height="5" fill={F} />}
              {i === 2 && <g stroke="#707070"><circle cx="6" cy="6" r="3.9" /><path d="M6 6 H9 V8 L8 9 H6 Z" fill="#707070" /></g>}
            </svg>
          </button>
        ))}
      </div>

      <button aria-label="Change Screen Mode" className="mx-auto mt-2">
        <svg width="22" height="17" viewBox="0 0 22 17" fill="#6d6d6d" stroke={F} strokeWidth="1.2" aria-hidden="true">
          <path d="M0.6 5.5 H14 V15.5 H0.6 Z" /><path d="M0.6 6 H14" strokeWidth="2.5" />
          <path d="M8.6 1.5 H21.4 V11.5 H8.6 Z" /><path d="M8 1.7 H22" strokeWidth="2.5" />
        </svg>
      </button>
      <button aria-label="Edit Toolbar" className="mx-auto mt-[22px]">
        <svg width="14" height="4" viewBox="0 0 14 4" fill={F} aria-hidden="true"><circle cx="2" cy="2" r="1.8" /><circle cx="7" cy="2" r="1.8" /><circle cx="12" cy="2" r="1.8" /></svg>
      </button>
    </aside>
  );
};

// circle centres on the artboard, left / top / bottom
const circles = [
  { cx: 306.5, cy: 269.5 },
  { cx: 411.5, cy: 223.5 },
  { cx: 397.5, cy: 328.5 },
];
const R = 104.5;

const Artwork = () => {
  const [a, b, c] = circles;
  return (
    <svg viewBox="0 0 799 599" className="block size-full" role="img" aria-label="Live paint group">
      <defs>
        <clipPath id="clipA"><circle {...a} r={R} /></clipPath>
        <clipPath id="clipB"><circle {...b} r={R} /></clipPath>
      </defs>
      <circle {...a} r={R} fill="#b40606" />
      <circle {...b} r={R} fill="#1acc24" />
      <circle {...c} r={R} fill="white" />
      <g clipPath="url(#clipA)">
        <circle {...b} r={R} fill="white" />
        <g clipPath="url(#clipB)"><circle {...c} r={R} fill="#7037e0" /></g>
      </g>
      <g fill="none">
        {circles.map((p) => (
          <g key={p.cx}>
            <circle {...p} r={R} stroke="#4a7ae6" strokeWidth="3.6" />
            <circle {...p} r={R} stroke="#0b1540" strokeWidth="1.5" />
          </g>
        ))}
      </g>
      <g fill="#4f80ff">
        {circles.flatMap(({ cx, cy }) => [[cx, cy - R], [cx + R, cy], [cx, cy + R], [cx - R, cy]]).map(([x, y]) => (
          <rect key={`${x}-${y}`} x={x - 3} y={y - 3} width="6" height="6" />
        ))}
      </g>
    </svg>
  );
};

const StatusBar = () => (
  <div className="flex h-[17px] shrink-0 font-[Roboto,sans-serif] text-[11px] text-[#eeeeee]">
    <div className="flex min-w-0 flex-1">
      <input aria-label="Zoom level" defaultValue="100%" className="ml-[3px] w-[51px] bg-[#464646] pt-1 pl-1 leading-3 outline-none" />
      <button aria-label="Zoom presets" className="flex w-[17px] items-center justify-center border-r border-[#464646] pt-1"><Chevron /></button>
      <input aria-label="Rotation" defaultValue="0º" className="ml-1 w-[52px] bg-[#464646] pt-1 pl-1 leading-3 outline-none" />
      <button aria-label="Rotation presets" className="flex w-[17px] items-center justify-center border-r border-[#464646] pt-1"><Chevron /></button>
      <div className="flex w-[42px] items-center justify-center gap-2.5">
        <svg width="8" height="9" viewBox="0 0 8 9" fill="#777" aria-hidden="true"><path d="M0 0 H2 V9 H0 Z M8 0 V9 L3 4.5 Z" /></svg>
        <svg width="5" height="9" viewBox="0 0 5 9" fill="#777" aria-hidden="true"><path d="M5 0 V9 L0 4.5 Z" /></svg>
      </div>
      <input aria-label="Artboard" defaultValue="1" className="w-10 bg-[#464646] pt-1 pl-[3px] leading-3 outline-none" />
      <button aria-label="Artboard list" className="flex w-[17px] items-center justify-center pt-1"><Chevron /></button>
      <div className="flex w-[45px] items-center justify-center gap-2.5 border-r border-[#464646]">
        <svg width="5" height="9" viewBox="0 0 5 9" fill="#777" aria-hidden="true"><path d="M0 0 V9 L5 4.5 Z" /></svg>
        <svg width="8" height="9" viewBox="0 0 8 9" fill="#777" aria-hidden="true"><path d="M0 0 V9 L5 4.5 Z M6 0 H8 V9 H6 Z" /></svg>
      </div>
      <span className="w-[199px] border-r border-[#464646] pt-1 text-center text-[10px] leading-3 text-[#d4d4d4]">Live Paint Bucket</span>
      <button aria-label="Status options" className="flex w-5 items-center justify-center">
        <svg width="6" height="9" viewBox="0 0 6 9" fill="#d8d8d8" aria-hidden="true"><path d="M0 0 V9 L5 4.5 Z" /></svg>
      </button>
      <div className="flex flex-1 items-center justify-between bg-[#4a4a4a] px-px">
        <Chevron dir="left" color="#aaa" />
        <span className="h-[15px] w-[25px] rounded-full bg-[#626262]" />
        <Chevron dir="right" color="#aaa" />
      </div>
    </div>
    <span className="w-4 bg-[#535353]" />
  </div>
);

const DocumentArea = () => (
  <main className="flex min-w-0 flex-1 flex-col border-x border-[#383838]">
    <div className="flex h-[29px] shrink-0 border-b border-[#383838] bg-[#424242] text-[11px] font-semibold text-[#eeeeee]">
      <div className="flex w-[299px] items-center justify-between border-r border-[#383838] bg-[#535353] pr-1.5 pl-[9px] whitespace-nowrap">
        <span>Live Paint Bucket Tool.ai* @ 100 % (RGB/Preview)</span>
        <button aria-label="Close document">
          <svg width="7" height="7" viewBox="0 0 7 7" stroke="#eee" strokeWidth="1.8" aria-hidden="true"><path d="M0.7 0.7 L6.3 6.3 M6.3 0.7 L0.7 6.3" /></svg>
        </button>
      </div>
    </div>
    <div className="flex min-h-0 flex-1">
      <div className="relative flex min-w-0 flex-1 items-center justify-center overflow-hidden bg-[#5f5f5f]">
        <div className="h-[601px] w-[801px] shrink-0 border border-black bg-white">
          <Artwork />
        </div>
        <span className="absolute top-[178px] left-0 h-3 w-1 border-y border-r border-white bg-[#7037e0] outline outline-black" />
      </div>
      <div className="flex w-4 shrink-0 flex-col items-center justify-between bg-[#4a4a4a] py-1">
        <Chevron dir="up" color="#aaa" />
        <span className="h-[25px] w-[15px] rounded-[7px] bg-[#626262]" />
        <Chevron color="#aaa" />
      </div>
    </div>
    <StatusBar />
  </main>
);

const PanelDock = () => (
  <aside className="flex w-[38px] shrink-0 flex-col border-x border-[#383838]">
    <button aria-label="Expand panels" className="flex h-[11px] w-full shrink-0 items-center justify-end bg-[#424242] pr-[5px]"><DoubleChevron /></button>
    {panelGroups.map((group, i) => (
      <div key={i} className="flex flex-col items-center border-b border-[#383838] pt-1 pb-[2px]">
        <Grip />
        <div className="pt-[2px]">
          {group.map((p) => (
            <button key={p.name} aria-label={p.name} className="flex h-7 w-9 items-center justify-center">
              <Icon>{p.icon}</Icon>
            </button>
          ))}
        </div>
      </div>
    ))}
  </aside>
);

interface CheckProps {
  label: string;
  checked?: boolean;
  focused?: boolean;
}

const Check = ({ label, checked = false, focused = false }: CheckProps) => (
  <label className="flex items-center gap-[5px] text-white">
    <span className="relative size-3">
      <input
        type="checkbox"
        defaultChecked={checked}
        className={clsx(
          'peer block size-3 appearance-none rounded-[1px] border border-[#c8c8c8]',
          focused ? 'checked:border-[#4a9af0] checked:bg-[#4a9af0]' : 'checked:bg-[#c8c8c8]'
        )}
      />
      <svg viewBox="0 0 12 12" fill="none" stroke="#444" strokeWidth="1.9" className="pointer-events-none absolute inset-0 hidden size-3 peer-checked:block" aria-hidden="true"><path d="M2.5 6.2 L5 8.7 L9.8 2.8" /></svg>
    </span>
    {label}
  </label>
);

const OptionsDialog = () => (
  <section role="dialog" aria-label="Live Paint Bucket Options" className="absolute top-[233px] right-[103px] w-[333px] border border-[#484848] bg-[#535353] font-[Roboto,sans-serif] text-[12px] leading-4 shadow-[0_2px_14px_rgba(0,0,0,0.45)]">
    <h2 className="flex h-[30px] items-center bg-white pl-2 text-black">Live Paint Bucket Options</h2>
    <div className="px-[15px] pt-[23px] pb-[30px]">
      <fieldset className="h-[81px] border border-[#4c4c4c] px-[10px]">
        <legend className="px-0 text-[#c0c0c0]">Options</legend>
        <div className="mt-[9px] flex gap-[10px]">
          <Check label="Paint Fills" checked focused />
          <Check label="Paint Strokes" />
        </div>
        <div className="mt-[9px] flex"><Check label="Cursor Swatch Preview" checked /></div>
      </fieldset>

      <fieldset className="mt-[14px] h-[93px] border border-[#4c4c4c] px-[10px]">
        <legend><Check label="Highlight" checked /></legend>
        <div className="mt-[10px] flex items-center">
          <label htmlFor="hl-color" className="w-[39px] pr-1 text-right text-[#c0c0c0]">Color:</label>
          <div className="relative h-5 w-[145px]">
            <select id="hl-color" className="block size-full appearance-none border border-[#606060] bg-[#4b4b4b] pl-[21px] text-white outline-none">
              <option>Light Red</option>
            </select>
            <span className="pointer-events-none absolute top-[2px] left-[3px] size-4 border border-[#333] bg-[#ff4f4f]" />
            <span className="pointer-events-none absolute inset-y-0 right-1 flex items-center"><Chevron /></span>
          </div>
          <button aria-label="Highlight color" className="ml-[11px] size-[21px] border border-white bg-[#ff4f4f]" />
        </div>
        <div className="mt-[10px] flex items-center">
          <label htmlFor="hl-width" className="w-[39px] pr-1 text-right text-[#c0c0c0]">Width:</label>
          <div className="flex h-5 border border-[#606060]">
            <Spinner />
            <input id="hl-width" defaultValue="4 px" className="w-[51px] border-l border-[#606060] bg-[#464646] pl-[3px] text-white outline-none" />
          </div>
        </div>
      </fieldset>

      <div className="mt-[22px] flex justify-between text-white">
        <button className="h-[26px] w-[92px] rounded-full border border-white">Tips</button>
        <div className="flex gap-[5px]">
          <button className="h-[26px] w-[92px] rounded-full border-2 border-white">OK</button>
          <button className="h-[26px] w-[92px] rounded-full border border-white">Cancel</button>
        </div>
      </div>
    </div>
  </section>
);

export default function App() {
  return (
    <div className="bg-white">
      <div className="relative flex h-screen min-h-[720px] flex-col overflow-hidden rounded-t-[4px] border-t border-[#3a3a3a] bg-[#535353] font-['Noto_Sans',sans-serif]">
        <MenuBar />
        <div className="mr-1 mb-[3px] ml-[3px] flex min-h-0 flex-1 flex-col border border-[#383838]">
          <ControlBar />
          <div className="flex min-h-0 flex-1 border-t border-[#383838]">
            <ToolPanel />
            <span className="w-px bg-[#4a4a4a]" />
            <DocumentArea />
            <span className="w-px bg-[#4a4a4a]" />
            <PanelDock />
          </div>
        </div>
        <OptionsDialog />
      </div>
    </div>
  );
}
